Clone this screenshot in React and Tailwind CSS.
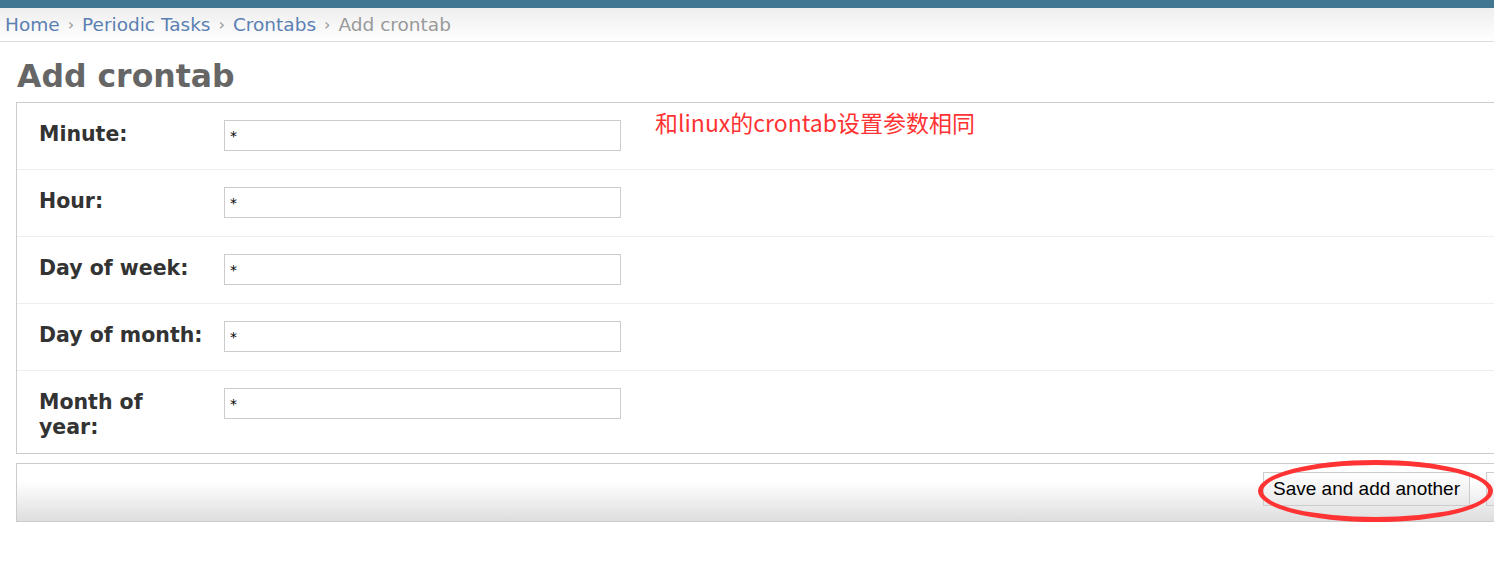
import React from 'react';

const fields = [
  { label: 'Minute:', value: '*' },
  { label: 'Hour:', value: '*' },
  { label: 'Day of week:', value: '*' },
  { label: 'Day of month:', value: '*' },
  { label: 'Month of year:', value: '*' },
];

const FormRow = ({ label, value, last }) => (
  <div
    className={`flex items-start pl-[22px] pt-[17px] ${
      last ? 'pb-[13px]' : 'pb-[18px] border-b border-[#eee]'
    }`}
  >
    <label className="w-[185px] shrink-0 pr-[19px] pt-[2px] text-[20.5px] leading-[25px] font-bold text-[#333]">
      {label}
    </label>
    <input
      type="text"
      defaultValue={value}
      className="w-[397px] h-[31px] border border-[#ccc] px-[5px] text-[14px] text-black bg-white outline-none"
      style={{ fontFamily: '"DejaVu Sans", sans-serif' }}
    />
  </div>
);

const Sep = () => <span className="mx-[8px] text-[16px]">›</span>;

const App = () => {
  return (
    <div
      className="relative w-[1494px] h-[561px] overflow-hidden bg-white"
      style={{ fontFamily: '"DejaVu Sans", "Noto Sans CJK SC", sans-serif' }}
    >
      <div className="h-[8px] bg-[#417690]" />
      <div className="h-[34px] pl-[5px] flex items-center bg-gradient-to-b from-[#eee] to-white border-b border-[#ddd] text-[18.5px] text-[#999]">
        <a className="text-[#5b80b2]">Home</a>
        <Sep />
        <a className="text-[#5b80b2]">Periodic Tasks</a>
        <Sep />
        <a className="text-[#5b80b2]">Crontabs</a>
        <Sep />
        <span>Add crontab</span>
      </div>

      <div className="pl-[16px]">
        <h1 className="pt-[15px] pb-[7px] pl-[1px] text-[31.5px] leading-[38px] font-bold text-[#666]">
          Add crontab
        </h1>

        <div className="w-[1500px] border border-[#ccc]">
          {fields.map((f, i) => (
            <FormRow key={f.label} {...f} last={i === fields.length - 1} />
          ))}
        </div>

        <div className="mt-[9px] w-[1500px] h-[59px] pt-[8px] border border-[#ccc] bg-gradient-to-b from-white from-30% to-[#dedede] flex items-start justify-end gap-[16px]">
          <button
            className="h-[34px] px-[9px] border border-[#ccc] bg-gradient-to-b from-white to-[#e8e8e8] text-[19px] text-black"
            style={{ fontFamily: '"Liberation Sans", Arial, sans-serif' }}
          >
            Save and add another
          </button>
          <button className="h-[34px] w-[29px] border border-[#ccc] bg-gradient-to-b from-white to-[#e8e8e8]" />
        </div>
      </div>

      <div
        className="absolute left-[655px] top-[105px] text-[23px] text-[#f33]"
        style={{ fontFamily: '"Noto Sans CJK SC", sans-serif' }}
      >
        和linux的crontab设置参数相同
      </div>

      <div className="absolute left-[1258px] top-[460px] w-[235px] h-[62px] rounded-[50%] border-[5px] border-[#f33]" />
    </div>
  );
};

export default App;
